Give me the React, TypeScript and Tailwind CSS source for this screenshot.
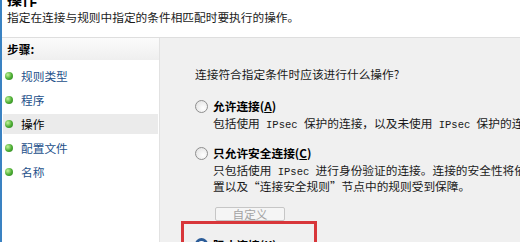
import React from "react";

const steps = [
  { label: "规则类型" },
  { label: "程序" },
  { label: "操作", active: true },
  { label: "配置文件" },
  { label: "名称" },
];

const Ip = () => (
  <span className="font-['Liberation_Mono',monospace] text-[10.5px] whitespace-pre">{" IPsec "}</span>
);

const Radio = ({ checked }: { checked?: boolean }) =>
  checked ? (
    <span className="w-[13px] h-[13px] shrink-0 rounded-full border-[3px] border-[#2b5c98] bg-white flex items-center justify-center">
      <span className="w-[3px] h-[3px] rounded-full bg-[#2b5c98]" />
    </span>
  ) : (
    <span className="w-[13px] h-[13px] shrink-0 rounded-full border border-[#8e8e8e] bg-[radial-gradient(circle_at_65%_65%,#ffffff,#dedede)]" />
  );

const Option = ({ checked, text, hotkey }: { checked?: boolean; text: string; hotkey: string }) => (
  <div className="flex items-center gap-[5px] h-[14px]">
    <Radio checked={checked} />
    <span className="font-bold leading-[14px] text-black">
      {text}(<span className="underline underline-offset-1">{hotkey}</span>)
    </span>
  </div>
);

export default function App() {
  return (
    <div className="w-[520px] h-[242px] overflow-hidden bg-white border-l-2 border-[#3a82c2] flex flex-col font-['Noto_Sans_CJK_SC',sans-serif] text-[11.7px] text-[#1a1a1a]">
      {/* page header */}
      <div className="h-[37px] shrink-0 pl-[5px] bg-white">
        <div className="-mt-[9px] h-[15px] leading-[15px] text-[15px] font-bold text-black">操作</div>
        <div className="mt-[4px] leading-[14px] whitespace-nowrap">指定在连接与规则中指定的条件相匹配时要执行的操作。</div>
      </div>
      <div className="h-px shrink-0 bg-[#dedede]" />

      <div className="flex flex-1 min-h-0">
        {/* steps */}
        <div className="w-[158px] shrink-0 bg-white border-r border-[#e2e2e2] flex flex-col">
          <div className="h-[22px] flex items-center pl-[5px] font-bold text-black bg-linear-to-b from-[#fbfbfb] to-[#efefef]">
            步骤:
          </div>
          <div className="flex flex-col gap-[4px] pt-[6px] px-[1px]">
            {steps.map((s) => (
              <div
                key={s.label}
                className={
                  s.active
                    ? "h-[20px] flex items-center gap-[8px] pl-[2px] bg-[#ebebeb] text-black"
                    : "h-[20px] flex items-center gap-[8px] pl-[2px] text-[#23508a]"
                }
              >
                <span className="w-[8px] h-[8px] rounded-full bg-[radial-gradient(circle_at_35%_35%,#c4f59a,#4aab32_55%,#2b7d20)]" />
                <span className="leading-[14px]">{s.label}</span>
              </div>
            ))}
          </div>
        </div>

        {/* action choice */}
        <div className="flex-1 bg-[#f0f0f0] pl-[35px] pt-[29px] flex flex-col items-start">
          <div className="leading-[14px] whitespace-nowrap">连接符合指定条件时应该进行什么操作?</div>

          <div className="mt-[18px]">
            <Option text="允许连接" hotkey="A" />
          </div>
          <div className="mt-[3px] pl-[18px] leading-[14px] whitespace-nowrap">
            包括使用<Ip />保护的连接，以及未使用<Ip />保护的连接。
          </div>

          <div className="mt-[14px]">
            <Option text="只允许安全连接" hotkey="C" />
          </div>
          <div className="mt-[3px] pl-[18px] leading-[13px] whitespace-nowrap">
            <div>
              只包括使用<Ip />进行身份验证的连接。连接的安全性将依据<Ip />属性中的设
            </div>
            <div>置以及“连接安全规则”节点中的规则受到保障。</div>
          </div>

          <button className="ml-[20px] mt-[15px] w-[70px] h-[18px] border border-[#c6c6c6] rounded-[2px] bg-[#f5f5f5] text-[#a3a3a3] flex items-center justify-center leading-none">
            自定义
          </button>

          <div className="-ml-[14px] w-[136px] h-[40px] shrink-0 border-[3px] border-[#d8363a] pt-[14px] pl-[11px]">
            <Option checked text="阻止连接" hotkey="K" />
          </div>
        </div>
      </div>
    </div>
  );
}
